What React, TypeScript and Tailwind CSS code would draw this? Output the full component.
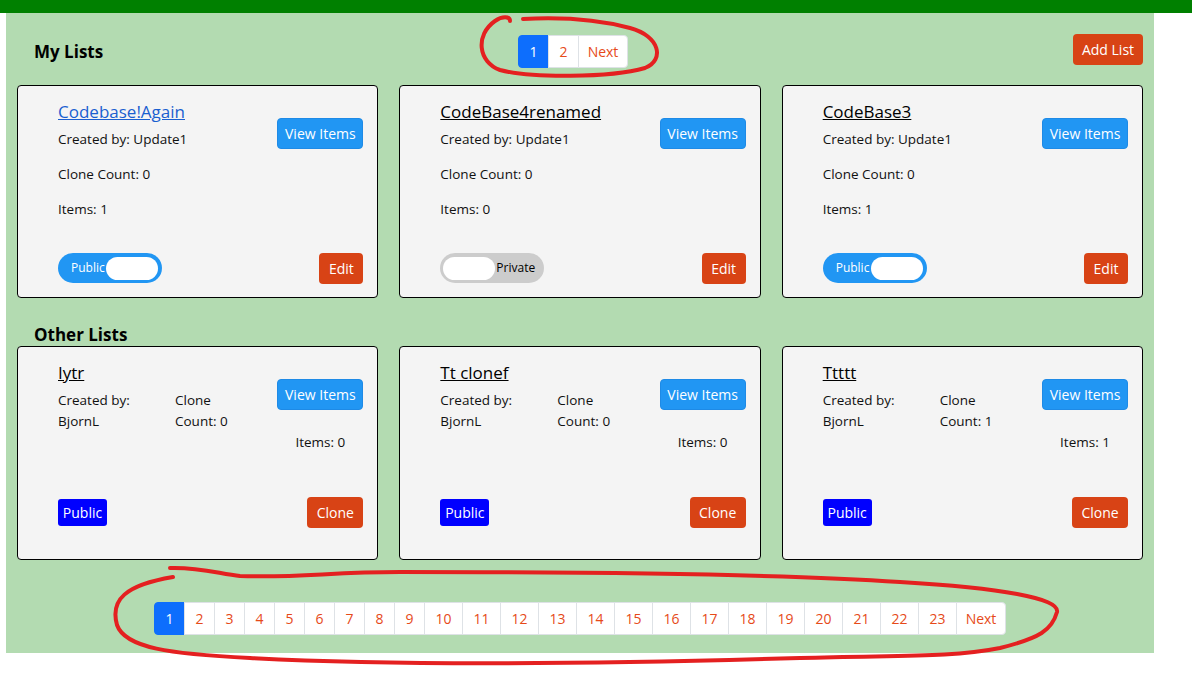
import React from 'react'

const FONT = '"Open Sans", "Noto Sans", Arial, sans-serif'

type MyList = { name: string; link?: boolean; items: number; isPublic: boolean }
type OtherList = { name: string; clones: number; items: number }

const MY_LISTS: MyList[] = [
  { name: 'Codebase!Again', link: true, items: 1, isPublic: true },
  { name: 'CodeBase4renamed', items: 0, isPublic: false },
  { name: 'CodeBase3', items: 1, isPublic: true },
]

const OTHER_LISTS: OtherList[] = [
  { name: 'Iytr', clones: 0, items: 0 },
  { name: 'Tt clonef', clones: 0, items: 0 },
  { name: 'Ttttt', clones: 1, items: 1 },
]

function Pagination({ pages }: { pages: number }) {
  const items = Array.from({ length: pages }, (_, i) => i + 1)
  return (
    <ul className="flex h-[33px] text-[14px]">
      {items.map((n) => (
        <li
          key={n}
          className={
            n === 1
              ? 'flex w-[31px] items-center justify-center rounded-l border border-[#0d6efd] bg-[#0d6efd] text-white'
              : n < 10
                ? '-ml-px flex w-[31px] items-center justify-center border border-[#dee2e6] bg-white text-[#e64a19]'
                : '-ml-px flex w-[39px] items-center justify-center border border-[#dee2e6] bg-white text-[#e64a19]'
          }
        >
          {n}
        </li>
      ))}
      <li className="-ml-px flex w-[50px] items-center justify-center rounded-r border border-[#dee2e6] bg-white text-[#e64a19]">
        Next
      </li>
    </ul>
  )
}

function Toggle({ on }: { on: boolean }) {
  if (on) {
    return (
      <div className="flex h-[30px] w-[104px] items-center rounded-full bg-[#2196f3] pl-[13px] pr-[4px] text-[12px] text-white">
        <span>Public</span>
        <span className="ml-auto h-[23px] w-[52px] rounded-full bg-white" />
      </div>
    )
  }
  return (
    <div className="flex h-[30px] w-[104px] items-center rounded-full bg-[#cccccc] pl-[3px] text-[12px] text-black">
      <span className="h-[23px] w-[52px] rounded-full bg-white" />
      <span className="ml-px">Private</span>
    </div>
  )
}

function MyListCard({ list }: { list: MyList }) {
  return (
    <div className="flex h-[213px] flex-col rounded border border-black bg-[#f4f4f4] pb-[13px] pl-10 pr-[14px] pt-[14px] text-[13.5px] text-[#111]">
      <div className="flex justify-between">
        <div>
          <a className={list.link ? 'text-[17px] leading-6 text-[#1a5fd0] underline' : 'text-[17px] leading-6 text-black underline'}>
            {list.name}
          </a>
          <p className="mt-[5px] leading-5">Created by: Update1</p>
          <p className="mt-[15px] leading-5">Clone Count: 0</p>
          <p className="mt-[15px] leading-5">Items: {list.items}</p>
        </div>
        <button className="mt-[18px] h-[31px] w-[86px] rounded border border-[#1e8ae6] bg-[#2196f3] text-[14px] text-white">
          View Items
        </button>
      </div>
      <div className="mt-auto flex items-start justify-between">
        <Toggle on={list.isPublic} />
        <button className="h-[31px] w-[44px] rounded bg-[#d84315] text-[14px] text-white">Edit</button>
      </div>
    </div>
  )
}

function OtherListCard({ list }: { list: OtherList }) {
  return (
    <div className="flex h-[214px] flex-col rounded border border-black bg-[#f4f4f4] pb-[31px] pl-10 pr-[14px] pt-[14px] text-[13.5px] text-[#111]">
      <div className="flex justify-between">
        <div>
          <a className="text-[17px] leading-6 text-black underline">{list.name}</a>
          <div className="mt-[5px] grid w-[219px] grid-cols-[117px_102px] leading-[21px]">
            <p>
              Created by:
              <br />
              BjornL
            </p>
            <p>
              Clone
              <br />
              Count: {list.clones}
            </p>
          </div>
        </div>
        <div className="flex w-[86px] flex-col items-center">
          <button className="mt-[18px] h-[31px] w-[86px] rounded border border-[#1e8ae6] bg-[#2196f3] text-[14px] text-white">
            View Items
          </button>
          <p className="mt-[22px] leading-5">Items: {list.items}</p>
        </div>
      </div>
      <div className="mt-auto flex items-center justify-between">
        <span className="flex h-[27px] w-[49px] items-center justify-center rounded-[3px] bg-[#0000ff] text-[14px] text-white">Public</span>
        <button className="h-[31px] w-[56px] rounded bg-[#d84315] text-[14px] text-white">Clone</button>
      </div>
    </div>
  )
}

export default function App() {
  return (
    <div className="relative min-h-[675px] bg-white" style={{ fontFamily: FONT }}>
      {/* Top bar */}
      <div className="h-[13px] bg-[#008000]" />

      {/* Panel */}
      <div className="ml-[6px] h-[640px] w-[1148px] bg-[#b3dbb1] px-[11px] pt-[22px]">
        <div className="flex h-[33px] items-center">
          <h2 className="w-[501px] pl-[17px] text-[17px] font-bold text-black">My Lists</h2>
          <Pagination pages={2} />
          <button className="-mt-[5px] ml-auto h-[31px] w-[70px] rounded bg-[#d84315] text-[14px] text-white">Add List</button>
        </div>

        <div className="mt-[17px] grid grid-cols-3 gap-[21px]">
          {MY_LISTS.map((l) => (
            <MyListCard key={l.name} list={l} />
          ))}
        </div>

        <h2 className="h-[48px] pl-[17px] pt-[25px] text-[17px] font-bold leading-6 text-black">Other Lists</h2>

        <div className="grid grid-cols-3 gap-[21px]">
          {OTHER_LISTS.map((l) => (
            <OtherListCard key={l.name} list={l} />
          ))}
        </div>

        <div className="mt-[42px] flex justify-center">
          <Pagination pages={23} />
        </div>
      </div>

      {/* Red marker annotations */}
      <svg className="pointer-events-none absolute left-0 top-0" width="1192" height="675" fill="none">
        <path
          d="M523 19 C560 17 600 20 630 28 C660 36 665 60 645 68 C610 78 530 78 500 70 C478 62 475 35 495 21 C502 16 510 16 510 21"
          stroke="#e42020"
          strokeWidth="4"
          strokeLinecap="round"
        />
        <path
          d="M170 568 C200 567 220 574 240 576 C300 578 330 572 400 572 C600 572 800 575 900 582 C1000 588 1060 598 1057 612 C1052 630 1040 638 1000 648 C950 658 900 655 800 658 C600 664 400 666 250 658 C170 654 125 648 117 625 C110 600 125 585 173 577"
          stroke="#e42020"
          strokeWidth="4"
          strokeLinecap="round"
        />
      </svg>
    </div>
  )
}
